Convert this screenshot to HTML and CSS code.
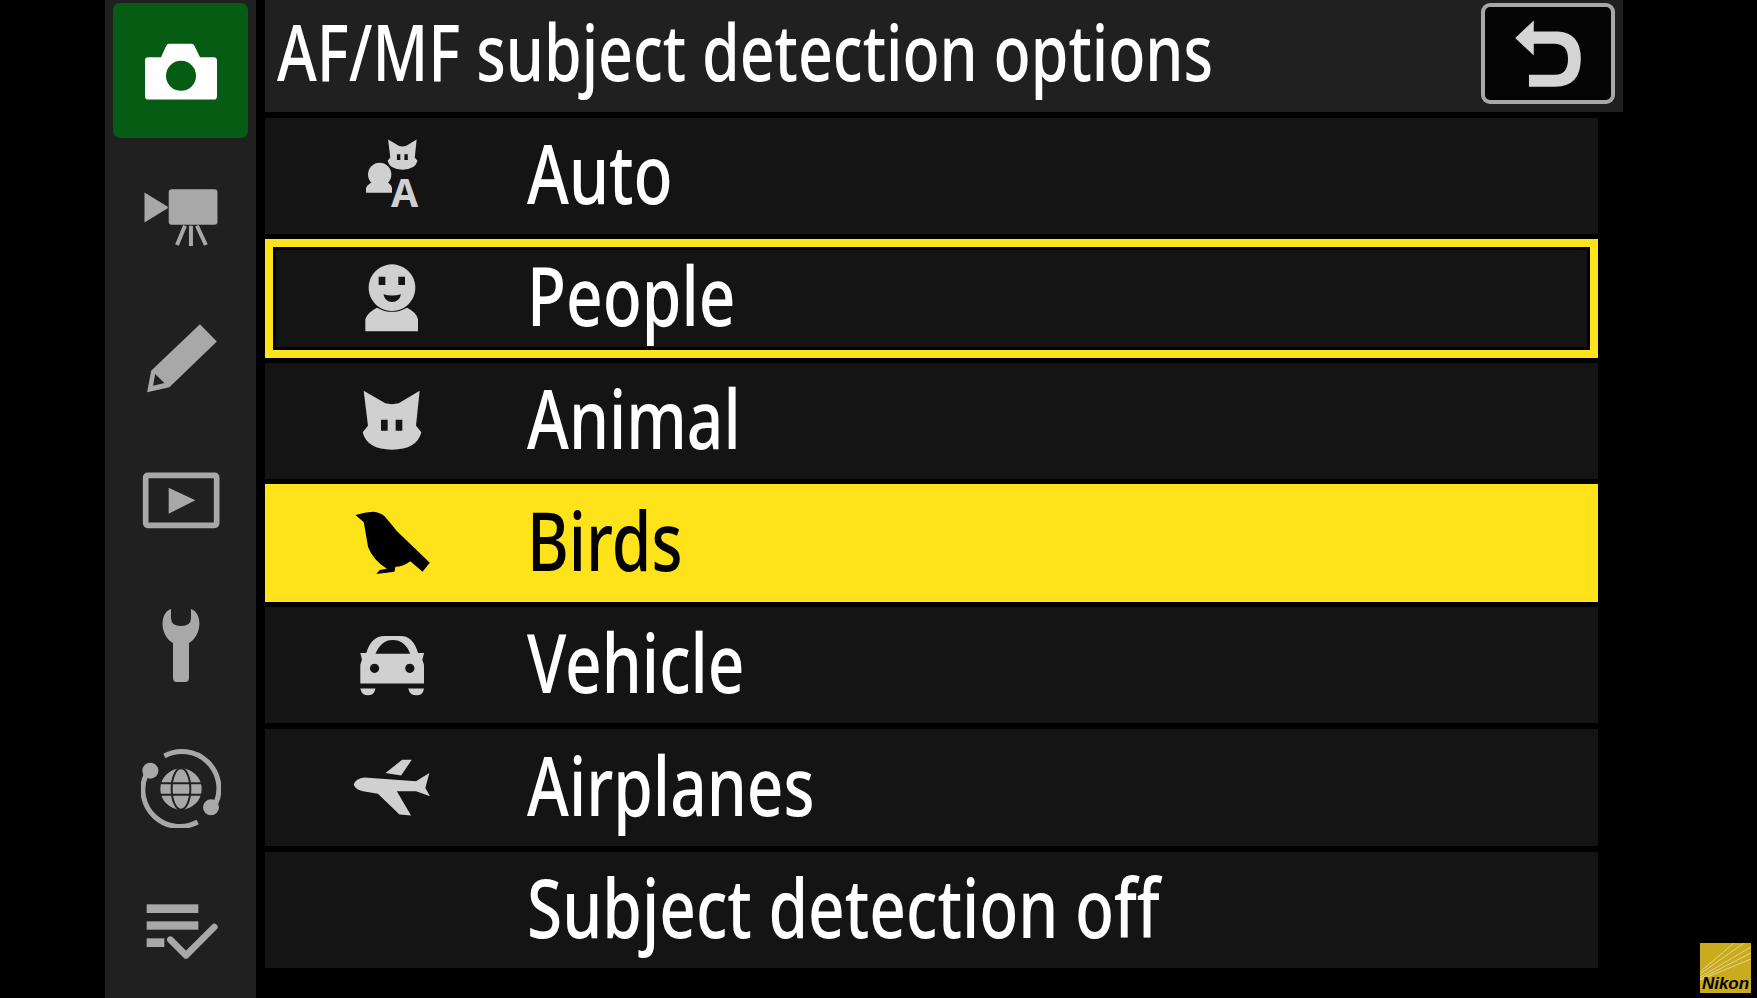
FILE: index.html
```html
<!DOCTYPE html>
<html lang="en">
<head>
    <meta charset="UTF-8">
    <title>AF/MF subject detection options</title>
    <link rel="stylesheet" href="styles.css">
</head>
<body>
    <nav class="sidebar">
        <div class="tab active">
            <svg class="ico" width="80" height="62" viewBox="120 117 240 185">
                <path class="fill-white" d="M132 178Q132 168 142 168H180L195 135Q198 128 205 128H270Q278 128 281 135L297 168H338Q348 168 348 178V285Q348 295 338 295H142Q132 295 132 285Z"/>
                <circle cx="240" cy="224" r="45" fill="#055c12"/>
            </svg>
        </div>
        <div class="tab">
            <svg class="ico" width="80" height="63" viewBox="120 546 240 190">
                <path d="M130 575L200 618V622L130 665Z"/>
                <rect x="203" y="565" width="147" height="107" rx="9"/>
                <path class="line" stroke-width="12" d="M252 675L228 733M270 675V738M288 675L315 733"/>
            </svg>
        </div>
        <div class="tab">
            <svg class="ico" width="80" height="73" viewBox="120 0 240 220">
                <path d="M297 10L348 62L205 200L138 215L150 150Z"/>
                <path fill="#202020" d="M162 160L190 187L156 195Z"/>
            </svg>
        </div>
        <div class="tab">
            <svg class="ico" width="80" height="60" viewBox="120 455 240 180">
                <rect class="line" stroke-width="17" x="134" y="468" width="213" height="150" rx="6"/>
                <path d="M203 505L283 543L203 583Z"/>
            </svg>
        </div>
        <div class="tab">
            <svg class="ico" width="50" height="80" viewBox="155 605 50 80">
                <path d="M170 609C158 613 159 636 172 643V678Q172 682 176 682H184Q188 682 188 678V643C201 636 202 613 190 609V618Q190 626 180 626Q170 626 170 618Z"/>
            </svg>
        </div>
        <div class="tab">
            <svg class="ico" width="80" height="80" viewBox="120 260 240 240">
                <path class="line" stroke-width="15" d="M190 284A111 111 0 0 1 345 425"/>
                <path class="line" stroke-width="15" d="M290 482A111 111 0 0 1 135 340"/>
                <circle cx="148" cy="328" r="24"/>
                <circle cx="330" cy="438" r="24"/>
                <circle cx="240" cy="383" r="62"/>
                <ellipse class="gap" cx="240" cy="383" rx="28" ry="62"/>
                <path class="gap" d="M176 366H304M176 400H304"/>
            </svg>
        </div>
        <div class="tab">
            <svg class="ico" width="80" height="62" viewBox="120 722 240 186">
                <rect x="137" y="732" width="155" height="26"/>
                <rect x="137" y="783" width="155" height="25"/>
                <rect x="137" y="834" width="53" height="26"/>
                <path class="line round" stroke-width="20" d="M208 838L255 885L340 800"/>
            </svg>
        </div>
    </nav>

    <main class="content">
        <header class="title-bar">
            <h1 class="title"><span>AF/MF subject detection options</span></h1>
            <div class="back-btn">
                <svg width="72" height="72" viewBox="215 50 225 220">
                    <path d="M283 55L225 110L283 165V128H350Q390 130 390 175Q390 225 350 225H268V262H350Q430 262 430 175Q430 95 360 90H283Z"/>
                </svg>
            </div>
        </header>

        <ul class="menu">
            <li class="row">
                <div class="row-icon">
                    <svg class="ico-item" width="60" height="87" viewBox="70 46 180 260">
                        <path transform="translate(110 32) scale(.51)" fill-rule="evenodd" d="M75 65L140 103Q160 108 180 103L243 65L232 170L248 190Q235 242 160 242Q85 242 72 190L88 170ZM127 152V185H147V152ZM171 152V185H191V152Z"/>
                        <circle cx="123" cy="170" r="35"/>
                        <path d="M82 225V210Q90 196 105 192H142Q155 196 160 210V225Z"/>
                        <text class="badge-a" x="198" y="268">A</text>
                    </svg>
                </div>
                <span class="label"><span>Auto</span></span>
            </li>
            <li class="row outlined">
                <div class="row-icon">
                    <svg class="ico-item" width="60" height="76" viewBox="70 422 180 228">
                        <path fill-rule="evenodd" d="M160 435A70 70 0 1 1 159.900 435ZM120 472V497H140V472ZM179 472V497H199V472ZM134 525Q160 532 187 525Q182 548 160 548Q140 548 134 525Z"/>
                        <path d="M80 636V600Q85 580 115 565Q160 590 205 565Q235 580 238 600V636Z"/>
                    </svg>
                </div>
                <span class="label"><span>People</span></span>
            </li>
            <li class="row">
                <div class="row-icon">
                    <svg class="ico-item" width="60" height="62" viewBox="70 63 180 186">
                        <path fill-rule="evenodd" d="M75 65L140 103Q160 108 180 103L243 65L232 170L248 190Q235 242 160 242Q85 242 72 190L88 170ZM127 152V185H147V152ZM171 152V185H191V152Z"/>
                    </svg>
                </div>
                <span class="label"><span>Animal</span></span>
            </li>
            <li class="row active">
                <div class="row-icon">
                    <svg class="ico-item" width="78" height="66" viewBox="40 418 235 200">
                        <path d="M47 433Q75 424 100 423Q122 425 135 437Q155 460 172 482L272 578L250 605L213 573Q190 590 168 590L165 605L110 612L120 600L142 596Q100 570 85 530L72 455Z"/>
                    </svg>
                </div>
                <span class="label"><span>Birds</span></span>
            </li>
            <li class="row">
                <div class="row-icon">
                    <svg class="ico-item" width="66" height="64" viewBox="58 70 200 192">
                        <path fill-rule="evenodd" d="M62 130H80Q95 78 135 78H185Q222 78 237 130H255L250 150L255 165V222H62V165L67 150ZM108 132H213Q198 90 160 90Q125 90 108 132ZM105 162A14 14 0 1 0 105.100 162ZM212 162A14 14 0 1 0 212.100 162Z"/>
                        <path d="M62 237H108Q104 258 85 258Q66 258 62 237ZM207 237H255Q252 258 232 258Q212 258 207 237Z"/>
                    </svg>
                </div>
                <span class="label"><span>Vehicle</span></span>
            </li>
            <li class="row">
                <div class="row-icon">
                    <svg class="ico-item" width="78" height="58" viewBox="40 448 235 174">
                        <path d="M42 525Q48 505 75 503L230 515L270 490L258 535L272 560L230 545L172 545L215 618L180 615L115 552L70 545Q48 540 42 525ZM138 490L188 450H217L185 497Z"/>
                    </svg>
                </div>
                <span class="label"><span>Airplanes</span></span>
            </li>
            <li class="row">
                <div class="row-icon"></div>
                <span class="label"><span>Subject detection off</span></span>
            </li>
        </ul>
    </main>

    <div class="logo">
        <svg class="logo-rays" width="51" height="50" viewBox="0 0 51 50">
            <path d="M0 34L51 4M0 36L51 10M0 31L44 0M0 37L51 16M0 29L34 0"/>
        </svg>
        <span>Nikon</span>
    </div>
</body>
</html>
```

FILE: styles.css
```css
* {
    box-sizing: border-box;
}

body {
    margin: 0;
    height: 998px;
    overflow: hidden;
    display: flex;
    gap: 9px;
    padding-left: 105px;
    background-color: #000;
    color: #fff;
    font-family: "Noto Sans", sans-serif;
}

.sidebar {
    width: 151px;
    height: 998px;
    padding: 3px 8px 0;
    display: flex;
    flex-direction: column;
    gap: 8.5px;
    background-color: #202020;
}

.tab {
    height: 135px;
    flex: none;
    display: flex;
    align-items: center;
    justify-content: center;
}

.tab.active {
    background-color: #055c12;
    border-radius: 7px;
}

.ico {
    fill: #a8a8a8;
}

.fill-white {
    fill: #fff;
}

.line {
    fill: none;
    stroke: #a8a8a8;
}

.round {
    stroke-linecap: round;
    stroke-linejoin: round;
}

.gap {
    fill: none;
    stroke: #202020;
    stroke-width: 6;
}

.content {
    width: 1358px;
    display: flex;
    flex-direction: column;
    gap: 6px;
}

.title-bar {
    height: 112px;
    flex: none;
    display: flex;
    align-items: flex-start;
    justify-content: space-between;
    padding: 3px 8px 0 12px;
    background-color: #202020;
}

.title {
    margin: 0;
    padding-top: 9px;
    font-size: 78px;
    font-weight: 500;
    line-height: 1;
    white-space: nowrap;
}

.title span,
.label span {
    display: inline-block;
    transform: scaleX(.78);
    transform-origin: left center;
}

.back-btn {
    width: 134px;
    height: 101px;
    display: flex;
    align-items: center;
    justify-content: center;
    background-color: #050505;
    border: 4px solid #a8a8a8;
    border-radius: 9px;
}

.back-btn svg {
    fill: #d4d4d4;
}

.menu {
    width: 1333px;
    margin: 0;
    padding: 0;
    list-style: none;
    display: flex;
    flex-direction: column;
    gap: 6px;
}

.row {
    height: 116.3px;
    display: flex;
    align-items: center;
    background-color: #141414;
}

.row-icon {
    width: 254px;
    flex: none;
    display: flex;
    justify-content: center;
}

.ico-item {
    fill: #d0d0d0;
}

.badge-a {
    font-family: "Noto Sans", sans-serif;
    font-size: 118px;
    font-weight: 700;
    text-anchor: middle;
}

.label {
    margin-left: 8px;
    padding-bottom: 8px;
    font-size: 82px;
    font-weight: 500;
    line-height: 1;
    white-space: nowrap;
}

.row.outlined {
    margin: -1px 0;
    height: 118.3px;
    border: 8px solid #ffe31a;
    box-shadow: inset 0 0 0 3px #000;
}

.row.outlined .row-icon {
    width: 238px;
}

.row.outlined .label {
    margin-left: 16px;
}

.row.active {
    margin: -1px 0;
    height: 118.3px;
    background-color: #ffe31a;
    color: #000;
}

.row.active .ico-item {
    fill: #000;
}

.logo {
    position: absolute;
    left: 1700px;
    top: 943px;
    width: 51px;
    height: 50px;
    display: flex;
    align-items: flex-end;
    justify-content: center;
    background-color: #c9ab1d;
    color: #000;
    font-family: "Liberation Sans", sans-serif;
    font-size: 17px;
    font-weight: 700;
    font-style: italic;
    line-height: 18px;
}

.logo span {
    position: relative;
}

.logo-rays {
    position: absolute;
    left: 0;
    top: 0;
    fill: none;
    stroke: #e2d68c;
    stroke-width: 1;
}
```
